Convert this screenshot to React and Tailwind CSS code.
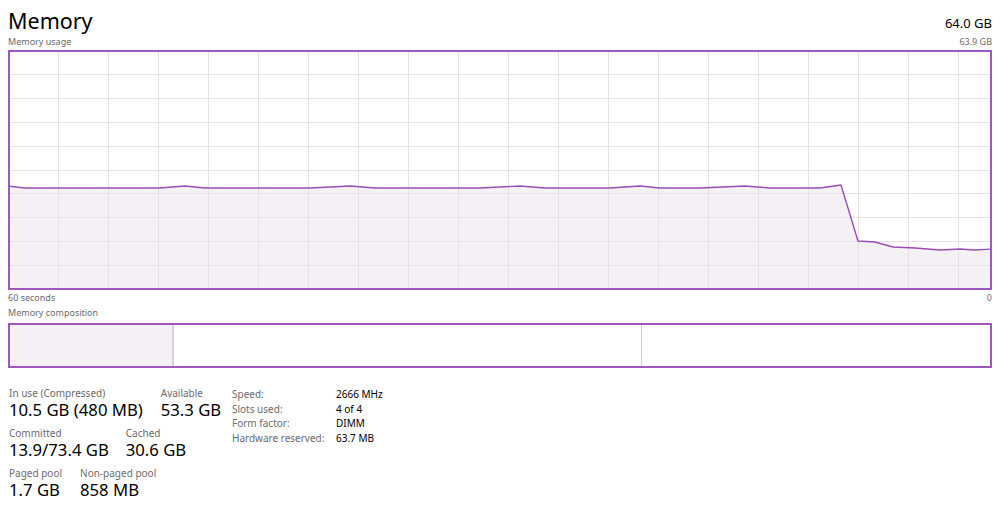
import React from 'react';

const LINE = [
    [8, 186], [25, 188], [160, 188], [185, 186], [205, 188], [310, 188], [350, 186], [375, 188],
    [480, 188], [520, 186], [545, 188], [610, 188], [640, 186], [660, 188], [700, 188], [745, 186],
    [770, 188], [820, 188], [841, 185], [858, 241], [875, 242], [893, 247], [915, 248], [940, 250],
    [960, 249], [975, 250], [992, 249],
];

// chart inner box origin in page coords (border is 2px)
const OX = 10;
const OY = 52;
const W = 980;
const H = 236;

const UsageChart = () => {
    const pts = LINE.map(([x, y]) => `${x - OX},${y - OY}`).join(' ');
    const area = `${-2},${H} ${pts} ${W + 2},${H}`;
    const vlines = [];
    for (let x = 48; x < W; x += 50) vlines.push(x);
    const hlines = [];
    for (let i = 1; i < 10; i++) hlines.push(Math.round(i * 23.9) - 2);

    return (
        <div className="h-[240px] border-2 border-[#a057bb] bg-white">
            <svg width={W} height={H} className="block">
                <polygon points={area} fill="#f4f1f5" />
                {vlines.map(x => (
                    <line key={'v' + x} x1={x + 0.5} y1={0} x2={x + 0.5} y2={H} stroke="#e8dfeb" strokeWidth="1" />
                ))}
                {hlines.map(y => (
                    <line key={'h' + y} x1={0} y1={y + 0.5} x2={W} y2={y + 0.5} stroke="#e8dfeb" strokeWidth="1" />
                ))}
                <polyline points={pts} fill="none" stroke="#9a4cb8" strokeWidth="1.4" strokeLinejoin="round" />
            </svg>
        </div>
    );
};

const Stat = ({ label, value }) => (
    <div>
        <div className="text-[10px] leading-[12px] text-[#6b6b6b]">{label}</div>
        <div className="text-[16.7px] leading-[22px] text-black">{value}</div>
    </div>
);

export default function App() {
    return (
        <div className="w-[1000px] h-[511px] bg-white px-2 overflow-hidden" style={{ fontFamily: '"Noto Sans", "Open Sans", sans-serif' }}>
            {/* Header */}
            <div className="flex justify-between items-end h-[36px]">
                <span className="text-[21.5px] leading-[30px] text-black">Memory</span>
                <span className="text-[13px] leading-[18px] text-black pb-[4px]">64.0 GB</span>
            </div>
            <div className="flex justify-between h-[14px] text-[9px] leading-[12px] text-[#6b6b6b]">
                <span>Memory usage</span>
                <span>63.9 GB</span>
            </div>

            <UsageChart />

            <div className="flex justify-between h-[15px] text-[9px] leading-[15px] text-[#6b6b6b]">
                <span>60 seconds</span>
                <span>0</span>
            </div>
            <div className="h-[18px] text-[9px] leading-[16px] text-[#6b6b6b]">Memory composition</div>

            {/* Composition */}
            <div className="flex h-[45px] border-2 border-[#a057bb] bg-white">
                <div className="w-[162px] bg-[#f4f1f5]" />
                <div className="w-[2px] bg-[#dccde2]" />
                <div className="w-[467px]" />
                <div className="w-[1px] bg-[#dcc7e3]" />
                <div className="flex-1" />
            </div>

            {/* Stats */}
            <div className="flex mt-[19px] pl-px">
                <div className="w-[223px] flex flex-col gap-[6px]">
                    <div className="flex gap-[18px]">
                        <Stat label="In use (Compressed)" value="10.5 GB (480 MB)" />
                        <Stat label="Available" value="53.3 GB" />
                    </div>
                    <div className="flex gap-[17px]">
                        <Stat label="Committed" value="13.9/73.4 GB" />
                        <Stat label="Cached" value="30.6 GB" />
                    </div>
                    <div className="flex gap-[18px]">
                        <Stat label="Paged pool" value="1.7 GB" />
                        <Stat label="Non-paged pool" value="858 MB" />
                    </div>
                </div>
                <div className="grid grid-cols-[104px_auto] auto-rows-[14.5px] text-[10px] leading-[14px]">
                    <span className="text-[#6b6b6b]">Speed:</span>
                    <span className="text-black">2666 MHz</span>
                    <span className="text-[#6b6b6b]">Slots used:</span>
                    <span className="text-black">4 of 4</span>
                    <span className="text-[#6b6b6b]">Form factor:</span>
                    <span className="text-black">DIMM</span>
                    <span className="text-[#6b6b6b]">Hardware reserved:</span>
                    <span className="text-black">63.7 MB</span>
                </div>
            </div>
        </div>
    );
}
